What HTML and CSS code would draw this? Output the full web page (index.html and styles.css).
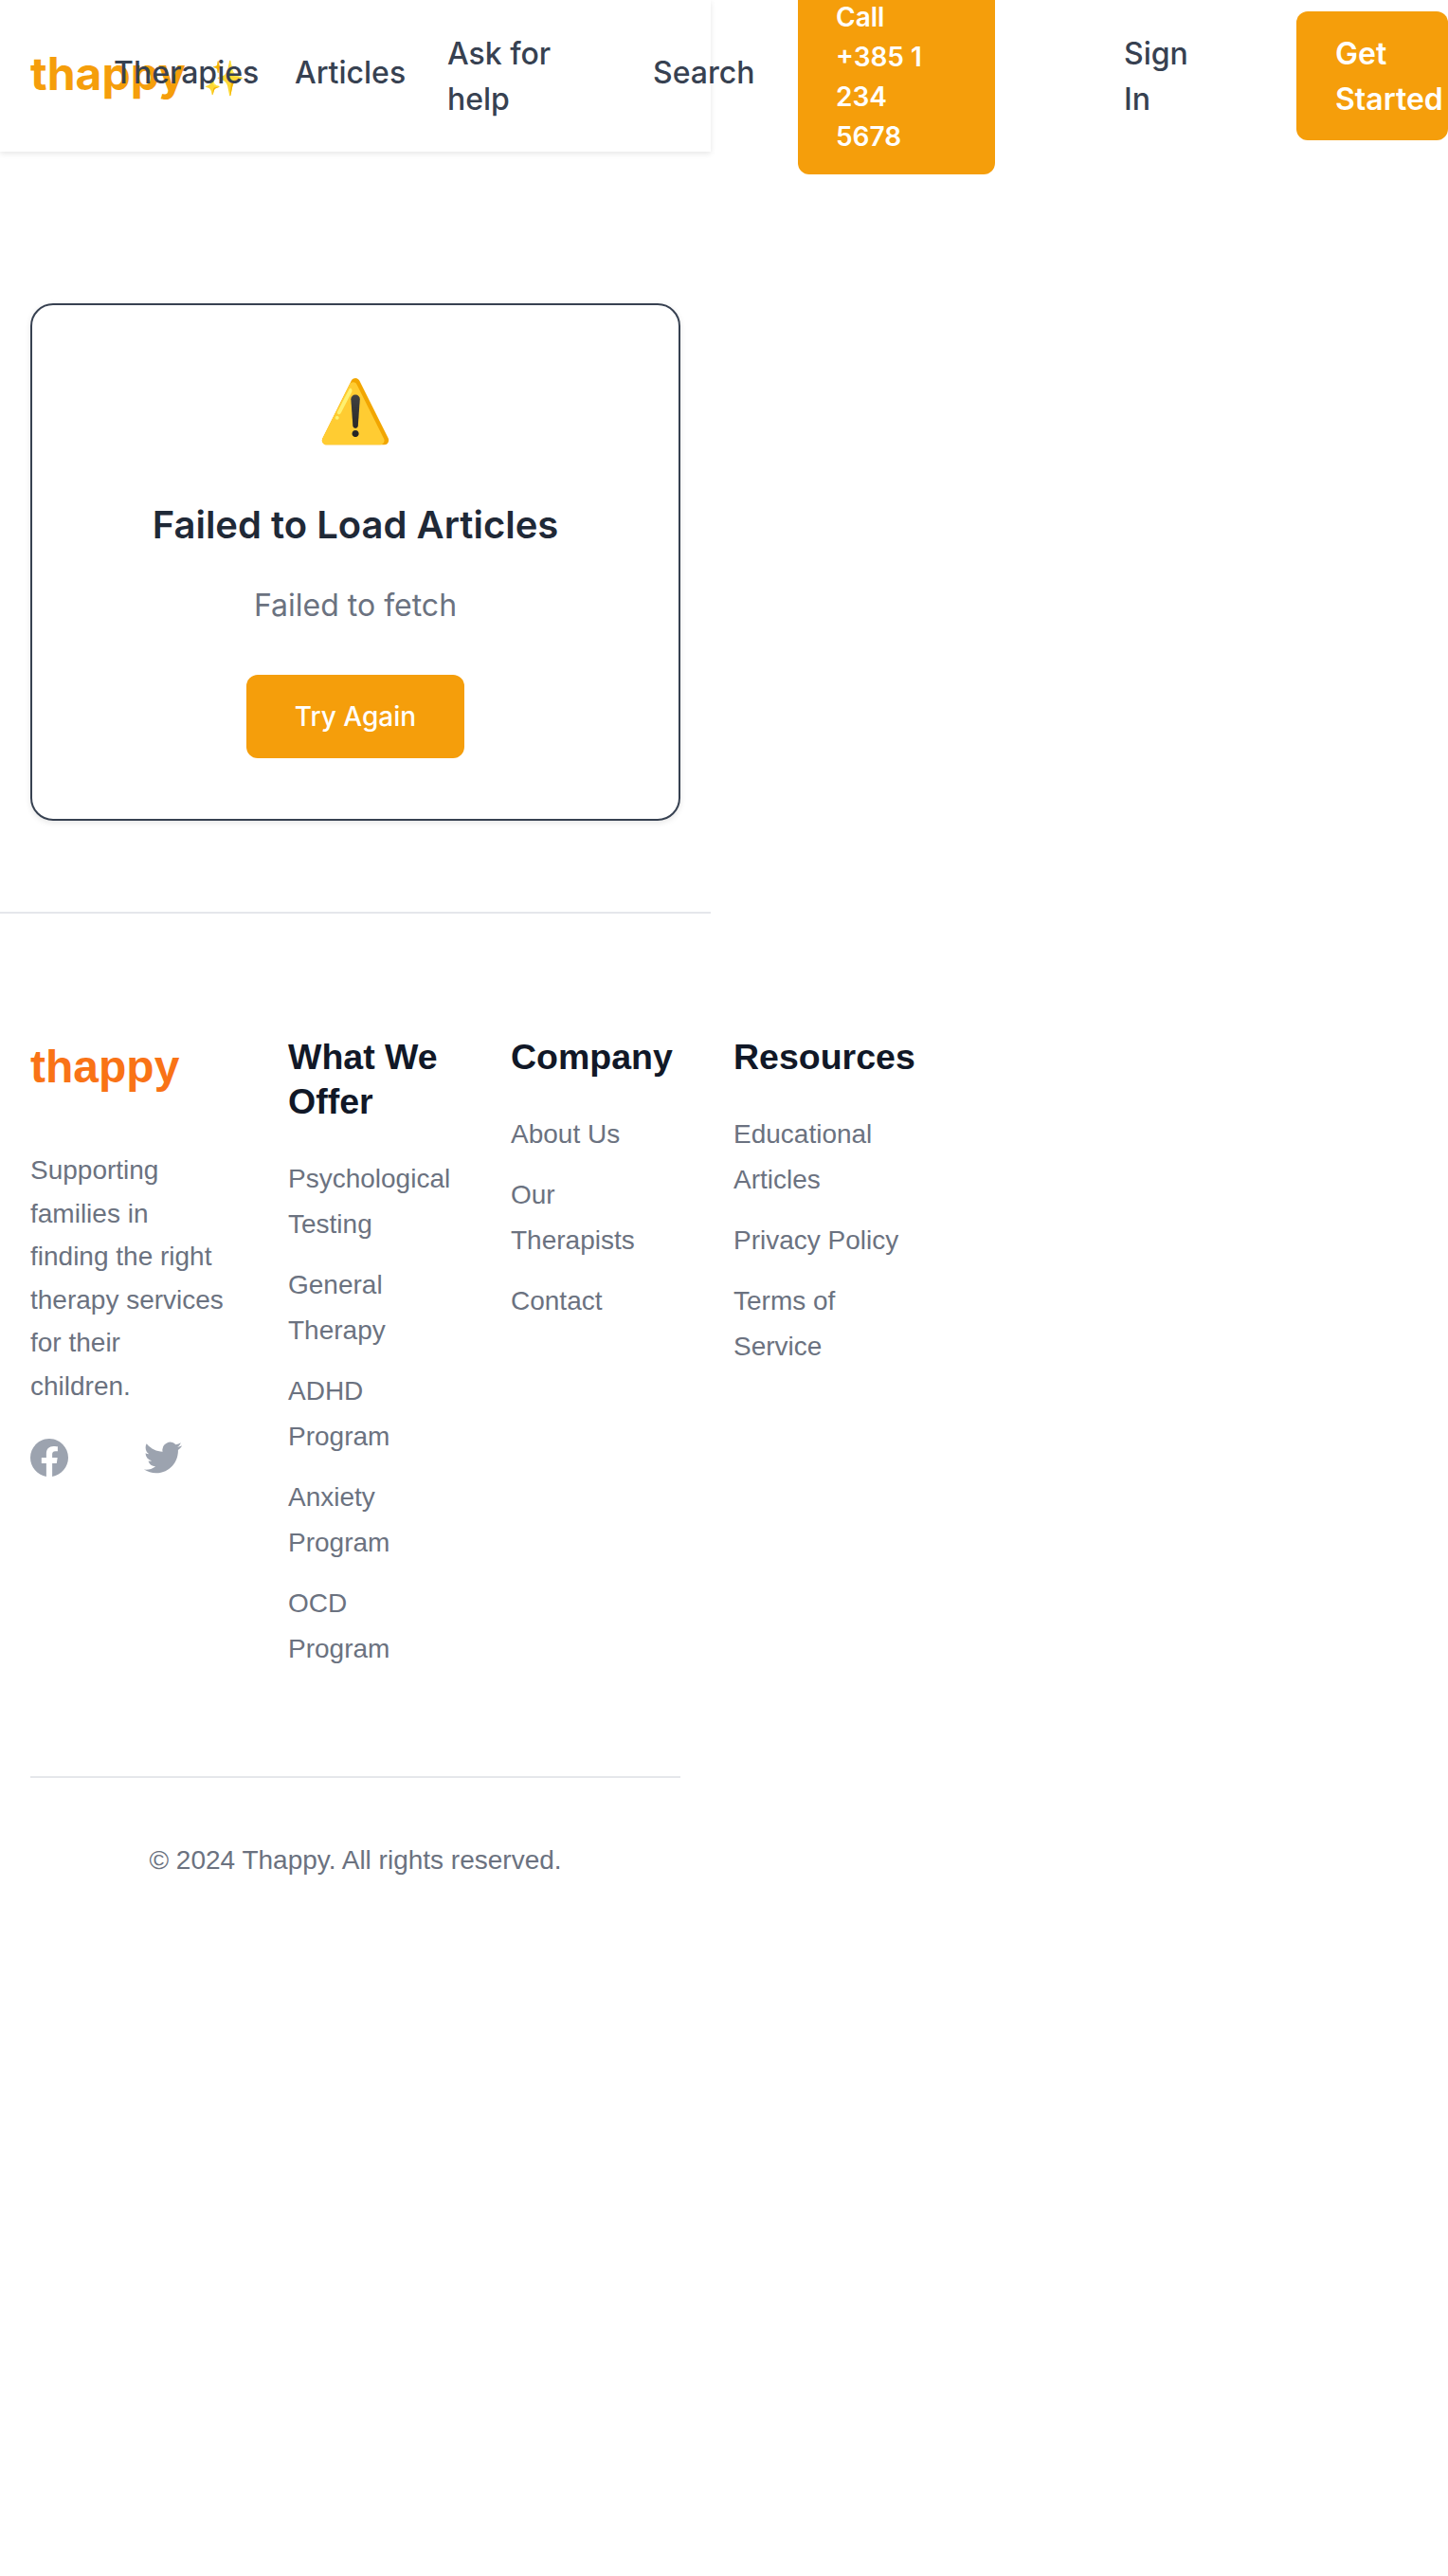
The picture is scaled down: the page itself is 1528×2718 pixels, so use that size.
FILE: index.html
```html
<!DOCTYPE html>
<html lang="en">
<head>
<meta charset="utf-8">
<title>thappy</title>
<link rel="stylesheet" href="styles.css">
</head>
<body>
<div class="page">
<header class="header">
  <a class="logo">thappy<span class="spark">✨</span></a>
  <nav class="nav">
    <a class="link therapies">Therapies</a>
    <a class="link articles">Articles</a>
    <a class="link help">Ask for help</a>
    <a class="link search">Search</a>
    <a class="call">Call +385 1 234 5678</a>
    <a class="link signin">Sign In</a>
    <a class="start">Get Started</a>
  </nav>
</header>
<main class="main">
  <section class="card">
    <div class="warn">⚠️</div>
    <h1 class="title">Failed to Load Articles</h1>
    <p class="message">Failed to fetch</p>
    <button class="retry">Try Again</button>
  </section>
</main>
<footer class="footer">
  <div class="columns">
    <div class="brand">
      <div class="brand-name">thappy</div>
      <p class="about">Supporting families in finding the right therapy services for their children.</p>
      <div class="social">
        <svg class="icon" viewBox="0 0 24 24"><path d="M24 12.073c0-6.627-5.373-12-12-12s-12 5.373-12 12c0 5.99 4.388 10.954 10.125 11.854v-8.385H7.078v-3.47h3.047V9.43c0-3.007 1.792-4.669 4.533-4.669 1.312 0 2.686.235 2.686.235v2.953H15.83c-1.491 0-1.956.925-1.956 1.874v2.25h3.328l-.532 3.47h-2.796v8.385C19.612 23.027 24 18.062 24 12.073z"/></svg>
        <svg class="icon" viewBox="0 0 24 24"><path d="M23.953 4.57a10 10 0 01-2.825.775 4.958 4.958 0 002.163-2.723c-.951.555-2.005.959-3.127 1.184a4.92 4.92 0 00-8.384 4.482C7.69 8.095 4.067 6.13 1.64 3.162a4.822 4.822 0 00-.666 2.475c0 1.71.87 3.213 2.188 4.096a4.904 4.904 0 01-2.228-.616v.06a4.923 4.923 0 003.946 4.827 4.996 4.996 0 01-2.212.085 4.936 4.936 0 004.604 3.417 9.867 9.867 0 01-6.102 2.105c-.39 0-.779-.023-1.17-.067a13.995 13.995 0 007.557 2.209c9.053 0 13.998-7.496 13.998-13.985 0-.21 0-.42-.015-.63A9.935 9.935 0 0024 4.59z"/></svg>
      </div>
    </div>
    <div>
      <h2 class="heading">What We Offer</h2>
      <ul class="list"><li>Psychological Testing</li><li>General Therapy</li><li>ADHD Program</li><li>Anxiety Program</li><li>OCD Program</li></ul>
    </div>
    <div>
      <h2 class="heading">Company</h2>
      <ul class="list"><li>About Us</li><li>Our Therapists</li><li>Contact</li></ul>
    </div>
    <div>
      <h2 class="heading">Resources</h2>
      <ul class="list"><li>Educational Articles</li><li>Privacy Policy</li><li>Terms of Service</li></ul>
    </div>
  </div>
  <p class="copyright">© 2024 Thappy. All rights reserved.</p>
</footer>
</div>
</body>
</html>
```
FILE: styles.css
```css
* { box-sizing: border-box; margin: 0; padding: 0; }
body {
  background: #fff;
  font-family: Inter, "Liberation Sans", sans-serif;
  font-size: 32px;
  line-height: 48px;
  color: #374151;
}
.page { width: 750px; min-height: 2718px; }
.header {
  display: flex;
  align-items: center;
  height: 160px;
  padding-left: 32px;
  box-shadow: 0 2px 6px rgba(0, 0, 0, .1);
}
.logo {
  flex: none;
  width: 88px;
  white-space: nowrap;
  font-size: 48px;
  font-weight: 700;
  line-height: 64px;
  color: #f59e0b;
}
.spark { margin-left: 18px; font-size: 36px; }
.nav { display: flex; flex: none; width: 1408px; align-items: center; font-weight: 500; }
.link { flex: none; }
.therapies { width: 191px; padding-bottom: 7px; }
.articles { width: 161px; padding-bottom: 7px; }
.help { width: 130px; margin-right: 87px; padding-top: 2px; }
.search { width: 153px; padding-bottom: 7px; }
.call, .start {
  flex: none;
  padding: 21px 40px 19px;
  border-radius: 12px;
  background: #f59e0b;
  color: #fff;
  font-weight: 600;
}
.call { width: 208px; font-size: 28px; line-height: 42px; }
.signin { width: 80px; margin: 0 102px 0 136px; padding-top: 2px; }
.start { width: 160px; padding-left: 41px; }
.main { padding: 160px 32px 96px; }
.card {
  height: 546px;
  padding: 63px 64px;
  border: 2px solid #374151;
  border-radius: 24px;
  text-align: center;
  box-shadow: 0 2px 6px rgba(0, 0, 0, .1);
}
.warn { height: 96px; margin-bottom: 45px; font-size: 64px; line-height: 96px; }
.title { margin-bottom: 33px; font-size: 40px; font-weight: 600; line-height: 56px; color: #1f2937; }
.message { margin-bottom: 49px; color: #6b7280; }
.retry {
  width: 230px;
  height: 88px;
  border: 0;
  border-radius: 12px;
  background: #f59e0b;
  color: #fff;
  font: 500 28px/42px Inter, sans-serif;
}
.footer {
  padding: 128px 32px 0;
  border-top: 2px solid #e5e7eb;
  font-family: "Liberation Sans", sans-serif;
  font-size: 28px;
  color: #6b7280;
}
.columns {
  display: grid;
  grid-template-columns: 208px 171px 171px 192px;
  column-gap: 64px;
  height: 782px;
}
.brand-name { margin: 2px 0 54px; font-size: 48px; font-weight: 700; line-height: 64px; color: #f97316; }
.about { line-height: 45.5px; }
.social { display: flex; gap: 80px; margin-top: 33px; }
.icon { width: 40px; height: 40px; fill: #9ca3af; }
.heading { margin-bottom: 34.2px; font-size: 37.5px; line-height: 46.8px; color: #111827; }
.list { list-style: none; }
.list li { margin-bottom: 16px; }
.copyright { padding-top: 63px; border-top: 2px solid #e5e7eb; text-align: center; }
```
